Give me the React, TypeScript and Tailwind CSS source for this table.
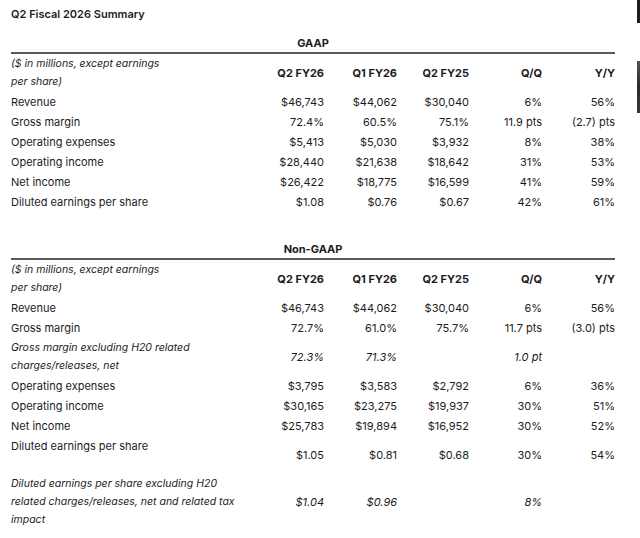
import React from "react";

type Row = {
  label: React.ReactNode;
  vals: string[];
  lines?: number;
  italic?: boolean;
};

const gridCols = "grid grid-cols-[239px_74px_73px_72px_73px_73px]";

function HeaderRow() {
  return (
    <div className={`${gridCols} py-px leading-[18px]`}>
      <div className="italic text-[10.5px]">
        ($ in millions, except earnings
        <br />
        per share)
      </div>
      {["Q2 FY26", "Q1 FY26", "Q2 FY25", "Q/Q", "Y/Y"].map((h) => (
        <div key={h} className="flex items-center justify-end font-bold">
          {h}
        </div>
      ))}
    </div>
  );
}

function DataRow({ r }: { r: Row }) {
  const lines = r.lines ?? 1;
  return (
    <div
      className={`${gridCols} leading-[18px] py-px ${lines === 1 ? "h-[20px]" : ""} ${
        r.italic ? "italic" : ""
      }`}
    >
      <div className={r.italic ? "text-[10.5px]" : ""}>{r.label}</div>
      {r.vals.map((v, i) => (
        <div key={i} className="flex items-center justify-end whitespace-nowrap">
          {v}
        </div>
      ))}
    </div>
  );
}

const gaap: Row[] = [
  { label: "Revenue", vals: ["$46,743", "$44,062", "$30,040", "6%", "56%"] },
  { label: "Gross margin", vals: ["72.4%", "60.5%", "75.1%", "11.9 pts", "(2.7) pts"] },
  { label: "Operating expenses", vals: ["$5,413", "$5,030", "$3,932", "8%", "38%"] },
  { label: "Operating income", vals: ["$28,440", "$21,638", "$18,642", "31%", "53%"] },
  { label: "Net income", vals: ["$26,422", "$18,775", "$16,599", "41%", "59%"] },
  { label: "Diluted earnings per share", vals: ["$1.08", "$0.76", "$0.67", "42%", "61%"] },
];

const nongaap: Row[] = [
  { label: "Revenue", vals: ["$46,743", "$44,062", "$30,040", "6%", "56%"] },
  { label: "Gross margin", vals: ["72.7%", "61.0%", "75.7%", "11.7 pts", "(3.0) pts"] },
  {
    label: (
      <>
        Gross margin excluding H20 related
        <br />
        charges/releases, net
      </>
    ),
    vals: ["72.3%", "71.3%", "", "1.0 pt", ""],
    lines: 2,
    italic: true,
  },
  { label: "Operating expenses", vals: ["$3,795", "$3,583", "$2,792", "6%", "36%"] },
  { label: "Operating income", vals: ["$30,165", "$23,275", "$19,937", "30%", "51%"] },
  { label: "Net income", vals: ["$25,783", "$19,894", "$16,952", "30%", "52%"] },
  {
    label: (
      <>
        Diluted earnings per share
        <br />
        &nbsp;
      </>
    ),
    vals: ["$1.05", "$0.81", "$0.68", "30%", "54%"],
    lines: 2,
  },
  {
    label: (
      <>
        Diluted earnings per share excluding H20
        <br />
        related charges/releases, net and related tax
        <br />
        impact
      </>
    ),
    vals: ["$1.04", "$0.96", "", "8%", ""],
    lines: 3,
    italic: true,
  },
];

export default function App() {
  return (
    <div
      className="relative w-[640px] h-[538px] overflow-hidden bg-white text-[11px] text-[#1c1c1c]"
      style={{ fontFamily: "Inter, 'Liberation Sans', sans-serif" }}
    >
      <div className="absolute right-0 top-0 w-[3px] h-[23px] bg-[#1e1e1e]" />
      <div className="absolute right-0 top-[61px] w-[3px] h-[52px] bg-gradient-to-b from-[#555] via-[#2a2a2a] to-[#3a3a3a]" />

      <div className="pl-[11px] w-[615px]">
        <div className="pt-[5px] h-[23px] text-[11px] font-semibold leading-[18px]">
          Q2 Fiscal 2026 Summary
        </div>
        <div className="mt-[11px] h-[18px] leading-[18px] text-center font-bold">GAAP</div>
        <div className="h-[2px] bg-[#5a5a5a]" />
        <HeaderRow />
        {gaap.map((r, i) => (
          <DataRow key={i} r={r} />
        ))}

        <div className="mt-[28px] h-[18px] leading-[18px] text-center font-bold">Non-GAAP</div>
        <div className="h-[2px] bg-[#5a5a5a]" />
        <HeaderRow />
        {nongaap.map((r, i) => (
          <DataRow key={i} r={r} />
        ))}
      </div>
    </div>
  );
}
